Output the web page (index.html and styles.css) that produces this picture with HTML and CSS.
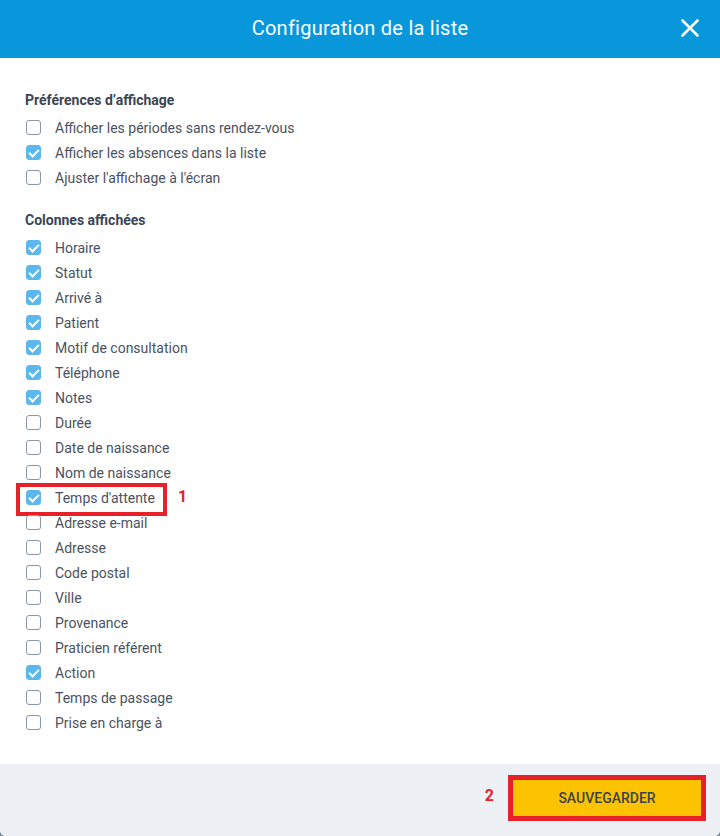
FILE: index.html
```html
<!DOCTYPE html>
<html lang="fr">
<head>
<meta charset="utf-8">
<title>Configuration de la liste</title>
<link rel="stylesheet" href="styles.css">
</head>
<body>
<div class="modal">
  <header class="modal-header">
    <h1 class="modal-title">Configuration de la liste</h1>
    <button class="close-btn" aria-label="Fermer">
      <svg width="18" height="18" viewBox="0 0 18 18"><path d="M1.5 1.5 L16.5 16.5 M16.5 1.5 L1.5 16.5" stroke="#fff" stroke-width="2.6" stroke-linecap="round" fill="none"/></svg>
    </button>
  </header>
  <main class="modal-body">
    <section class="group">
      <h2 class="group-title">Préférences d’affichage</h2>
      <div class="row"><span class="cb"></span><span class="label">Afficher les périodes sans rendez-vous</span></div>
      <div class="row"><span class="cb on"></span><span class="label">Afficher les absences dans la liste</span></div>
      <div class="row"><span class="cb"></span><span class="label">Ajuster l'affichage à l'écran</span></div>
    </section>
    <section class="group">
      <h2 class="group-title">Colonnes affichées</h2>
      <div class="row"><span class="cb on"></span><span class="label">Horaire</span></div>
      <div class="row"><span class="cb on"></span><span class="label">Statut</span></div>
      <div class="row"><span class="cb on"></span><span class="label">Arrivé à</span></div>
      <div class="row"><span class="cb on"></span><span class="label">Patient</span></div>
      <div class="row"><span class="cb on"></span><span class="label">Motif de consultation</span></div>
      <div class="row"><span class="cb on"></span><span class="label">Téléphone</span></div>
      <div class="row"><span class="cb on"></span><span class="label">Notes</span></div>
      <div class="row"><span class="cb"></span><span class="label">Durée</span></div>
      <div class="row"><span class="cb"></span><span class="label">Date de naissance</span></div>
      <div class="row"><span class="cb"></span><span class="label">Nom de naissance</span></div>
      <div class="row"><span class="cb on"></span><span class="label">Temps d'attente</span><span class="annot-box"></span><span class="annot-num num1">1</span></div>
      <div class="row"><span class="cb"></span><span class="label">Adresse e-mail</span></div>
      <div class="row"><span class="cb"></span><span class="label">Adresse</span></div>
      <div class="row"><span class="cb"></span><span class="label">Code postal</span></div>
      <div class="row"><span class="cb"></span><span class="label">Ville</span></div>
      <div class="row"><span class="cb"></span><span class="label">Provenance</span></div>
      <div class="row"><span class="cb"></span><span class="label">Praticien référent</span></div>
      <div class="row"><span class="cb on"></span><span class="label">Action</span></div>
      <div class="row"><span class="cb"></span><span class="label">Temps de passage</span></div>
      <div class="row"><span class="cb"></span><span class="label">Prise en charge à</span></div>
    </section>
  </main>
  <footer class="modal-footer">
    <span class="num2">2</span>
    <button class="save-btn">SAUVEGARDER</button>
  </footer>
</div>
</body>
</html>
```
FILE: styles.css
```css
html {
  background: #7f8c97;
}
body {
  margin: 0;
  font-family: Roboto, "Liberation Sans", sans-serif;
  font-size: 14px;
  color: #4a5262;
}
.modal {
  width: 720px;
  height: 836px;
  background: #fff;
  display: flex;
  flex-direction: column;
  border-radius: 0 0 6px 6px;
  overflow: hidden;
}
.modal-header {
  height: 58px;
  flex: none;
  background: #0997dc;
  display: flex;
  align-items: center;
  justify-content: center;
  position: relative;
}
.modal-title {
  margin: 0 0 2px;
  font-size: 20px;
  font-weight: 400;
  color: #fff;
  letter-spacing: 0.25px;
}
.close-btn {
  position: absolute;
  right: 21px;
  top: 19px;
  width: 18px;
  height: 18px;
  padding: 0;
  border: 0;
  background: none;
  display: flex;
}
.modal-body {
  flex: 1;
  padding: 32px 0 0 25px;
}
.group + .group {
  margin-top: 20px;
}
.group-title {
  margin: 0 0 5px;
  font-size: 14px;
  line-height: 20px;
  font-weight: 700;
  color: #3c4554;
}
.row {
  height: 25px;
  display: flex;
  align-items: center;
  position: relative;
}
.cb {
  width: 15px;
  height: 15px;
  box-sizing: border-box;
  border: 1.5px solid #8c97a4;
  border-radius: 3px;
  margin-left: 1px;
  margin-right: 14px;
  flex: none;
  position: relative;
}
.cb.on {
  background: #5cb8ec;
  border-color: #5cb8ec;
}
.cb.on::after {
  content: "";
  position: absolute;
  left: 3.5px;
  top: 0.5px;
  width: 4px;
  height: 8px;
  border: solid #fff;
  border-width: 0 2px 2px 0;
  transform: rotate(45deg);
}
.label {
  line-height: 20px;
}
.annot-box {
  position: absolute;
  left: -9px;
  top: -2px;
  width: 151px;
  height: 33px;
  box-sizing: border-box;
  border: 4px solid #e8202a;
}
.annot-num {
  position: absolute;
  font-weight: 700;
  font-size: 16px;
  color: #e8202a;
}
.num1 {
  left: 153px;
  top: 2px;
}
.modal-footer {
  height: 72px;
  flex: none;
  background: #edf0f5;
  display: flex;
  justify-content: flex-end;
  align-items: flex-start;
  padding: 16px 19px 0 0;
  box-sizing: border-box;
}
.num2 {
  font-weight: 700;
  font-size: 16px;
  color: #e8202a;
  margin-right: 19px;
  margin-top: 6px;
}
.save-btn {
  width: 188px;
  height: 36px;
  background: #fdc300;
  border: 0;
  outline: 5px solid #e8202a;
  font-family: Roboto, "Liberation Sans", sans-serif;
  font-size: 14px;
  font-weight: 500;
  color: #3b4252;
  padding: 0;
}
```
